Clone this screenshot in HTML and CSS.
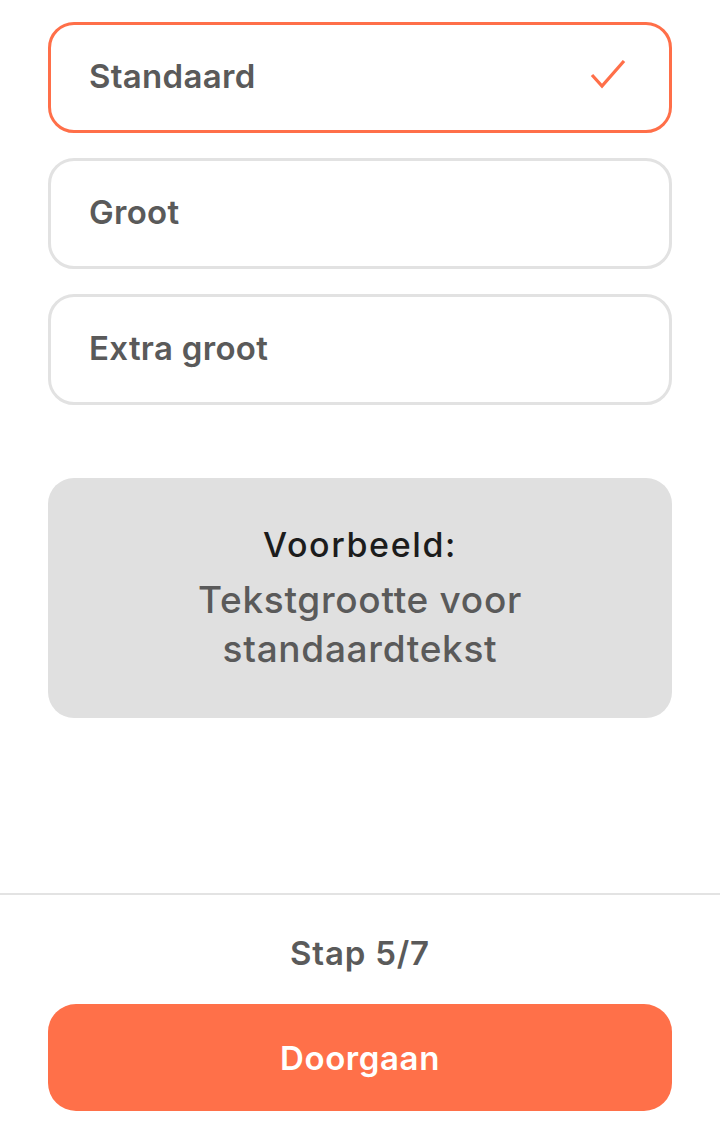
FILE: index.html
```html
<!DOCTYPE html>
<html lang="nl">
<head>
<meta charset="utf-8">
<link rel="stylesheet" href="styles.css">
</head>
<body>
<div class="page">
  <main class="content">
    <div class="options">
      <div class="option selected">
        <span class="option-label">Standaard</span>
        <svg class="check" width="40" height="32" viewBox="0 0 40 32"><path d="M3 15 L13 26 L35 1" fill="none" stroke="#FF6F49" stroke-width="3.2"/></svg>
      </div>
      <div class="option">
        <span class="option-label">Groot</span>
      </div>
      <div class="option">
        <span class="option-label">Extra groot</span>
      </div>
    </div>
    <div class="preview">
      <div class="preview-title">Voorbeeld:</div>
      <div class="preview-text">Tekstgrootte voor<br>standaardtekst</div>
    </div>
  </main>
  <footer class="footer">
    <div class="step">Stap 5/7</div>
    <button class="cta">Doorgaan</button>
  </footer>
</div>
</body>
</html>
```
FILE: styles.css
```css
* { box-sizing: border-box; }
html, body { margin: 0; padding: 0; background: #fff; }
body {
  font-family: Inter, "Liberation Sans", sans-serif;
  color: #5a5a5a;
}
.page {
  height: 1133px;
  display: flex;
  flex-direction: column;
  overflow: hidden;
}
.content {
  flex: 1;
  padding: 22px 48px 0;
}
.options {
  display: flex;
  flex-direction: column;
  gap: 25px;
}
.option {
  height: 111px;
  border: 3px solid #e2e2e2;
  border-radius: 26px;
  display: flex;
  align-items: center;
  justify-content: space-between;
  padding: 0 40px 0 38px;
}
.option.selected { border-color: #FF6F49; }
.option-label {
  font-size: 33px;
  font-weight: 600;
  letter-spacing: 0.3px;
  color: #5a5a5a;
  position: relative;
  top: -2px;
}
.check { display: block; margin-top: -4px; margin-right: 0; }
.preview {
  margin-top: 73px;
  height: 240px;
  background: #e0e0e0;
  border-radius: 26px;
  display: flex;
  flex-direction: column;
  align-items: center;
  justify-content: center;
  text-align: center;
}
.preview-title {
  font-size: 34px;
  font-weight: 500;
  letter-spacing: 1.6px;
  color: #1c1c1c;
  line-height: 48px;
  position: relative;
  top: -2px;
}
.preview-text {
  font-size: 37px;
  font-weight: 500;
  letter-spacing: 0.7px;
  color: #5a5a5a;
  line-height: 49px;
  margin-top: 4px;
}
.footer {
  border-top: 2px solid #e3e3e3;
  padding: 34px 48px 22px;
  display: flex;
  flex-direction: column;
  align-items: center;
}
.step {
  font-size: 33px;
  font-weight: 600;
  letter-spacing: 0.8px;
  color: #5a5a5a;
  line-height: 48px;
}
.cta {
  margin-top: 27px;
  width: 100%;
  height: 107px;
  border: none;
  border-radius: 28px;
  background: #FF7049;
  color: #fff;
  font-family: Inter, "Liberation Sans", sans-serif;
  font-size: 33px;
  font-weight: 600;
  letter-spacing: 0.6px;
}
```
